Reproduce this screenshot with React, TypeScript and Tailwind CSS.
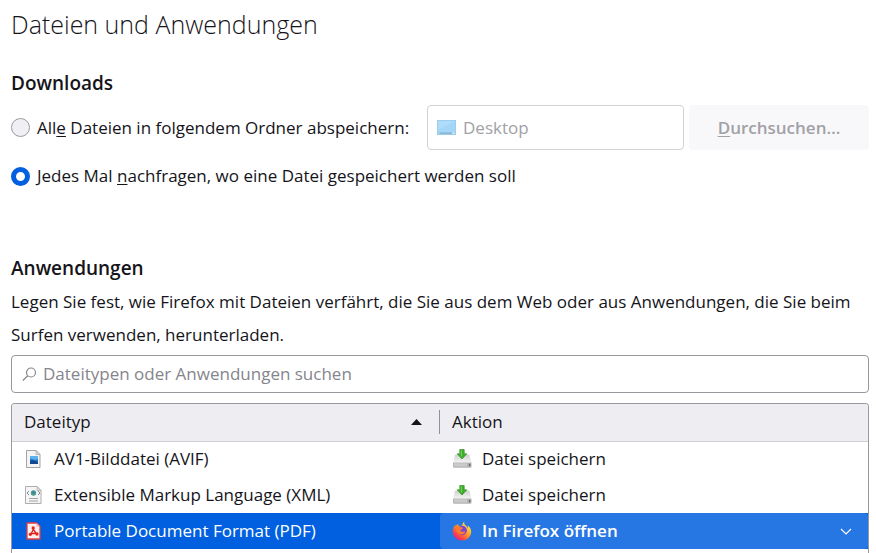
import React from 'react';

interface FileType {
  name: string;
  icon: React.ReactNode;
}

function ImageFileIcon() {
  return (
    <svg className="h-5 w-[18px]" viewBox="0 0 18 20" fill="none" aria-hidden="true">
      <path d="M2.500 1.500h9.500l4 4v13h-13.500z" fill="#f4f4f4" stroke="#a3a3a3" />
      <path d="M12 1.500v4h4z" fill="#dcdcdc" stroke="#a3a3a3" strokeWidth=".7" />
      <rect x="6" y="7" width="8" height="8" fill="#1d78cc" />
      <path d="M6 7h8v3l-3 1 -5 -1.500z" fill="#5bb0ee" />
      <path d="M6 15v-3l3 -1 5 2v2z" fill="#134a8c" />
    </svg>
  );
}

function XmlFileIcon() {
  return (
    <svg className="h-5 w-[18px]" viewBox="0 0 18 20" fill="none" aria-hidden="true">
      <path d="M1.500 1.500h11.500l4 4v13H1.500z" fill="#f5f5f5" stroke="#adadad" />
      <path d="M13 1.500v4h4z" fill="#dcdcdc" stroke="#adadad" strokeWidth=".7" />
      <path d="M5 6l-2 2 2 2M14 6l2 2 -2 2" stroke="#7c8894" />
      <circle cx="9.500" cy="8" r="2.700" fill="#4a9c8c" />
      <path d="M8 7l1.500 -1 1 1 -1 2z" fill="#3f79ad" />
      <path d="M5 13.500h9M5 16h9" stroke="#a2a2a8" />
    </svg>
  );
}

function PdfFileIcon() {
  return (
    <svg className="h-5 w-[18px]" viewBox="0 0 18 20" fill="none" aria-hidden="true">
      <path d="M3 2h9.500l3.500 3.500V18H3z" fill="#fdf0ef" stroke="#e0403f" strokeWidth="1.300" strokeLinejoin="round" />
      <path d="M12.500 2v3.500H16z" fill="#f6b3ae" />
      <g stroke="#e2231a" strokeWidth="1.300" strokeLinejoin="round">
        <path d="M9.300 8.500L7.200 12.500h5z" />
        <circle cx="9.200" cy="7" r="1" fill="#e2231a" />
        <circle cx="6.300" cy="13.300" r="1" fill="#e2231a" />
        <circle cx="13" cy="13" r="1" fill="#e2231a" />
      </g>
    </svg>
  );
}

function SaveIcon() {
  return (
    <svg className="h-5 w-5 shrink-0" viewBox="0 0 20 20" fill="none" aria-hidden="true">
      <defs>
        <linearGradient id="drive" x1="10" y1="6" x2="10" y2="14" gradientUnits="userSpaceOnUse">
          <stop offset="0" stopColor="#cfcfcf" />
          <stop offset="1" stopColor="#f7f7f7" />
        </linearGradient>
      </defs>
      <path d="M4 5.500h12.500q.8 0 1 .7l1.800 7.300H1.200L3 6.200q.2 -.7 1 -.7z" fill="url(#drive)" />
      <path d="M1 13.500h18.500v4q0 1.300 -1.300 1.300H2.300Q1 18.800 1 17.500z" fill="#b4b4b4" />
      <path d="M2 14.300h13v3.200H2z" fill="#cacaca" />
      <path d="M17 14.800h1.300v2.500H17z" fill="#666" />
      <path d="M7.800 .5h4.400v4.300h2.600L10 10 5.200 4.800h2.600z" fill="#3fae2c" stroke="#349125" strokeWidth=".7" />
      <path d="M8.800 1.500H10v6.500L8.800 6.500z" fill="#6fcf58" />
    </svg>
  );
}

function FirefoxIcon() {
  return (
    <svg className="h-5 w-5 shrink-0" viewBox="0 0 20 20" fill="none" aria-hidden="true">
      <defs>
        <linearGradient id="flame" x1="16" y1="3" x2="4" y2="18" gradientUnits="userSpaceOnUse">
          <stop offset="0" stopColor="#ffe64a" />
          <stop offset=".4" stopColor="#ffa01e" />
          <stop offset=".75" stopColor="#ff4a48" />
          <stop offset="1" stopColor="#e8207c" />
        </linearGradient>
      </defs>
      <path
        d="M12.300 .5c-.6 2 .4 3.200 1.700 4.300 1 .8 1.500 1.600 1.700 2.400.3-.8.3-1.800 0-2.900 2.200 1.700 3.500 4 3.500 6.500a9.200 8.700 0 0 1-18.400 0c0-2.900 1.100-5.400 2.400-7.300l.4 1.900c.7-1.200 1.500-2 2.600-2.700-.2 1 0 1.700.4 2.300 2 .1 3-.2 3.800-1.300C10.800 2.600 11.200 1.400 12.300 .5z"
        fill="url(#flame)"
      />
      <circle cx="10.200" cy="9.500" r="4.700" fill="#7a42d8" />
      <path d="M4 5.600c1.800-.8 3.500-.4 4.600.6 1.300 0 2.300.3 2.500.9-.3 1-1.700 1.200-2.500 1.900-.5.7.2 1.600 1.700 1.700 1.500.1 2.300-.5 3.200 0-.8 2.500-4 3.500-6.500 2.300S3.500 8.600 4 5.600z" fill="#ff7a2a" />
    </svg>
  );
}

const fileTypes: FileType[] = [
  { name: 'AV1-Bilddatei (AVIF)', icon: <ImageFileIcon /> },
  { name: 'Extensible Markup Language (XML)', icon: <XmlFileIcon /> },
];

const radioClass =
  'h-[19px] w-[19px] shrink-0 appearance-none rounded-full border border-[#9a9aa0] bg-[#f0f0f4] checked:border-5 checked:border-[#0060df] checked:bg-white';

function Downloads() {
  return (
    <section>
      <h2 className="mt-[25px] text-[19px] leading-7 font-semibold">Downloads</h2>
      <div className="mt-2 flex h-[45px] items-center">
        <label className="flex flex-1 items-center gap-[7px] whitespace-nowrap">
          <input type="radio" name="saveWhere" className={radioClass} />
          <span>
            All<u className="underline-offset-2">e</u> Dateien in folgendem Ordner abspeichern:
          </span>
        </label>
        <div className="flex h-full w-[257px] items-center gap-[7px] rounded-[4px] border border-[#d2d2d6] px-[9px]">
          <svg className="h-[15px] w-[19px] shrink-0" viewBox="0 0 19 15" aria-hidden="true">
            <rect width="19" height="15" fill="#9bcdec" />
            <path d="M1 1h17v11H1z" fill="#a3d6f7" />
            <path d="M1 1h17L1 10z" fill="#aedcf9" />
            <path d="M3 12.500h12V14H3z" fill="#8fb6d0" />
            <path d="M15.500 12.500h2V14h-2z" fill="#d9effb" />
          </svg>
          <input
            type="text"
            disabled
            defaultValue="Desktop"
            aria-label="Download-Ordner"
            className="w-full min-w-0 bg-transparent text-[#a1a1a6]"
          />
        </div>
        <button
          type="button"
          disabled
          className="ml-[5px] h-full w-[180px] rounded-[4px] bg-[#f8f8fa] font-semibold text-[#a1a1a6]"
        >
          <u className="underline-offset-2">D</u>urchsuchen…
        </button>
      </div>
      <label className="mt-3 flex h-7 items-center gap-[7px]">
        <input type="radio" name="saveWhere" defaultChecked className={radioClass} />
        <span>
          Jedes Mal <u className="underline-offset-2">n</u>achfragen, wo eine Datei gespeichert werden soll
        </span>
      </label>
    </section>
  );
}

function ApplicationsTable() {
  return (
    <div className="mt-[10px] flex-1 overflow-hidden rounded-t-[4px] border border-b-0 border-[#98989e]">
      <table className="w-full table-fixed border-collapse text-left">
        <thead>
          <tr className="h-[37px] border-b border-[#cfcfd4] bg-[#eeeef2]">
            <th className="p-0 font-normal">
              <div className="flex items-center justify-between border-r border-[#8f8f9d] pr-[17px] pl-3 leading-6">
                Dateityp
                <svg className="h-[6px] w-[11px]" viewBox="0 0 11 6" aria-hidden="true">
                  <path d="M0 6L5.500 0 11 6z" fill="#15141a" />
                </svg>
              </div>
            </th>
            <th className="px-3 py-0 font-normal">Aktion</th>
          </tr>
        </thead>
        <tbody>
          {fileTypes.map((type) => (
            <tr key={type.name} className="h-9">
              <td className="py-0 pr-0 pl-3">
                <div className="flex items-center gap-3">
                  {type.icon}
                  {type.name}
                </div>
              </td>
              <td className="px-3 py-0">
                <div className="flex items-center gap-[10px]">
                  <SaveIcon />
                  Datei speichern
                </div>
              </td>
            </tr>
          ))}
          <tr className="h-9 bg-[#0060df] text-white">
            <td className="py-0 pr-0 pl-3">
              <div className="flex items-center gap-3">
                <PdfFileIcon />
                Portable Document Format (PDF)
              </div>
            </td>
            <td className="p-0">
              <div className="flex h-9 items-center gap-[10px] rounded-[4px] bg-[#2677e4] pr-4 pl-3">
                <FirefoxIcon />
                <select
                  aria-label="Aktion"
                  className="min-w-0 flex-1 appearance-none bg-transparent font-semibold text-white"
                >
                  <option>In Firefox öffnen</option>
                </select>
                <svg className="h-[7px] w-3" viewBox="0 0 12 7" fill="none" aria-hidden="true">
                  <path d="M1 1l5 5 5-5" stroke="#fff" strokeWidth="1.200" />
                </svg>
              </div>
            </td>
          </tr>
        </tbody>
      </table>
    </div>
  );
}

export default function App() {
  return (
    <main className="flex min-h-screen flex-col bg-white pt-1 pr-[7px] pl-[11px] font-['Open_Sans','Noto_Sans',sans-serif] text-[17px] leading-6 text-[#15141a]">
      <h1 className="font-['Open_Sans_Light','Open_Sans',sans-serif] text-[25px] leading-10 font-light">
        Dateien und Anwendungen
      </h1>
      <Downloads />
      <section className="flex flex-1 flex-col">
        <h2 className="mt-16 text-[19px] leading-7 font-semibold">Anwendungen</h2>
        <p className="mt-[3px] leading-[33px]">
          Legen Sie fest, wie Firefox mit Dateien verfährt, die Sie aus dem Web oder aus Anwendungen, die Sie beim
          Surfen verwenden, herunterladen.
        </p>
        <div className="mt-1 flex h-[38px] items-center gap-[6px] rounded-[4px] border border-[#98989e] px-[10px]">
          <svg className="h-[15px] w-[15px] shrink-0" viewBox="0 0 15 15" fill="none" aria-hidden="true">
            <circle cx="9" cy="5.500" r="4.500" stroke="#85858c" strokeWidth="1.200" />
            <path d="M5.800 8.700L.8 13.500" stroke="#85858c" strokeWidth="1.200" />
          </svg>
          <input
            type="text"
            placeholder="Dateitypen oder Anwendungen suchen"
            aria-label="Dateitypen oder Anwendungen suchen"
            className="w-full min-w-0 bg-transparent outline-none placeholder:text-[#85858c]"
          />
        </div>
        <ApplicationsTable />
      </section>
    </main>
  );
}
